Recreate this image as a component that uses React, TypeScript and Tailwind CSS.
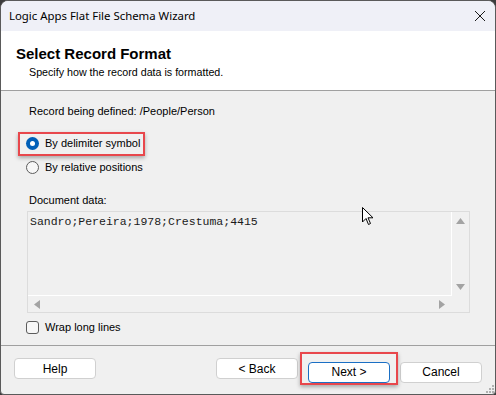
import React, { useState } from 'react';

const ui = { fontFamily: '"Liberation Sans", Arial, sans-serif' };
const mono = { fontFamily: '"Liberation Mono", "Courier New", monospace' };
const title = { fontFamily: '"Noto Sans", "Open Sans", sans-serif' };

function Radio({ checked }: { checked: boolean }) {
    return checked ? (
        <span className="w-[13px] h-[13px] rounded-full bg-[#005fb8] flex items-center justify-center">
            <span className="w-[5px] h-[5px] rounded-full bg-white" />
        </span>
    ) : (
        <span className="w-[13px] h-[13px] rounded-full border border-[#5c5c5c] bg-[#f7f7f7]" />
    );
}

function Btn({ label, primary }: { label: string; primary?: boolean }) {
    return (
        <button
            className={
                primary
                    ? 'w-[82px] h-[21px] rounded-[4px] bg-white border border-[#1a6fc4] text-[12px] text-black'
                    : 'w-[82px] h-[21px] rounded-[4px] bg-white border border-[#d0d0d0] text-[12px] text-black'
            }
            style={ui}
        >
            {label}
        </button>
    );
}

export default function App() {
    const [mode, setMode] = useState('delim');
    const [wrap, setWrap] = useState(false);

    return (
        <div className="w-[496px] h-[395px] bg-[#3c3c3c]">
            <div className="w-full h-full flex flex-col rounded-t-[8px] rounded-b-[4px] border border-[#5a5a5a] overflow-hidden bg-[#f0f0f0] relative">
                {/* title bar */}
                <div className="h-[30px] bg-[#eff0f7] flex items-center justify-between pl-[8px] pr-[9px]">
                    <span className="text-[11.4px] text-black" style={title}>Logic Apps Flat File Schema Wizard</span>
                    <svg width="12" height="12" viewBox="0 0 12 12">
                        <path d="M1 1L11 11M11 1L1 11" stroke="#1a1a1a" strokeWidth="1" fill="none" />
                    </svg>
                </div>

                {/* header */}
                <div className="h-[60px] bg-white border-b border-[#a0a0a0] pl-[15px] pt-[14px]" style={ui}>
                    <div className="text-[15px] font-bold leading-[18px] text-black">Select Record Format</div>
                    <div className="text-[10.7px] leading-[14px] pl-[13px] mt-[2px] text-black">Specify how the record data is formatted.</div>
                </div>

                {/* body */}
                <div className="flex-1 pl-[25px] pr-[25px] pt-[13px] border-b border-[#a0a0a0] relative text-[11px] leading-[14px]" style={ui}>
                    <div className="h-[14px] pl-[3px] text-black">Record being defined: /People/Person</div>

                    <div className="relative mt-[17px]">
                        <label className="h-[16px] flex items-center gap-[6px] text-black cursor-default" onClick={() => setMode('delim')}>
                            <Radio checked={mode === 'delim'} />
                            By delimiter symbol
                        </label>
                        <div className="absolute left-[-8px] top-[-3px] w-[127px] h-[24px] border-2 border-[#e8474c] shadow-[0_2px_4px_rgba(0,0,0,0.3)] pointer-events-none" />
                    </div>

                    <label className="mt-[8px] h-[16px] flex items-center gap-[6px] text-black cursor-default" onClick={() => setMode('rel')}>
                        <Radio checked={mode === 'rel'} />
                        By relative positions
                    </label>

                    <div className="mt-[18px] h-[14px] pl-[3px] text-black">Document data:</div>

                    <div className="mt-[4px] ml-[1px] h-[102px] border border-[#dcdcdc] bg-[#f0f0f0] flex flex-col">
                        <div className="flex-1 flex">
                            <div className="flex-1 border-r border-b border-white pl-[2px] pt-[3px] text-[11.5px] leading-[14px] text-[#1a1a1a]" style={mono}>
                                Sandro;Pereira;1978;Crestuma;4415
                            </div>
                            <div className="w-[17px] flex flex-col items-center justify-between py-[6px]">
                                <svg width="9" height="6" viewBox="0 0 9 6"><path d="M0 6L4.5 0L9 6Z" fill="#a3a3a3" /></svg>
                                <svg width="9" height="6" viewBox="0 0 9 6"><path d="M0 0L4.5 6L9 0Z" fill="#a3a3a3" /></svg>
                            </div>
                        </div>
                        <div className="h-[16px] flex items-center justify-between pl-[6px] pr-[24px]">
                            <svg width="6" height="9" viewBox="0 0 6 9"><path d="M6 0L0 4.5L6 9Z" fill="#a3a3a3" /></svg>
                            <svg width="6" height="9" viewBox="0 0 6 9"><path d="M0 0L6 4.5L0 9Z" fill="#a3a3a3" /></svg>
                        </div>
                    </div>

                    <label className="mt-[7px] h-[14px] flex items-center gap-[6px] text-black cursor-default" onClick={() => setWrap(!wrap)}>
                        <span className="w-[13px] h-[13px] rounded-[3px] border border-[#5c5c5c] bg-[#f7f7f7]" />
                        Wrap long lines
                    </label>

                    {/* mouse pointer */}
                    <svg className="absolute left-[361px] top-[116px]" width="12" height="19" viewBox="0 0 12 19">
                        <path d="M0.5 0.5L0.5 15L4 11.5L6.5 17.5L8.5 16.5L6 10.8L11 10.8Z" fill="white" stroke="black" strokeWidth="1" strokeLinejoin="round" />
                    </svg>
                </div>

                {/* footer */}
                <div className="h-[48px] flex items-start pt-[12px] pl-[13px] pr-[13px]">
                    <Btn label="Help" />
                    <div className="flex-1" />
                    <Btn label="< Back" />
                    <div className="relative ml-[10px]">
                        <Btn label="Next >" primary />
                        <div className="absolute left-[-8px] top-[-6px] w-[98px] h-[33px] border-2 border-[#e8474c] shadow-[0_2px_4px_rgba(0,0,0,0.3)] pointer-events-none" />
                    </div>
                    <div className="ml-[10px]"><Btn label="Cancel" /></div>
                </div>

                {/* resize grip */}
                <svg className="absolute right-[1px] bottom-[1px]" width="8" height="8" viewBox="0 0 8 8">
                    <rect x="6" y="0" width="2" height="2" fill="#b0b0b0" />
                    <rect x="3" y="3" width="2" height="2" fill="#b0b0b0" />
                    <rect x="6" y="3" width="2" height="2" fill="#b0b0b0" />
                    <rect x="0" y="6" width="2" height="2" fill="#b0b0b0" />
                    <rect x="3" y="6" width="2" height="2" fill="#b0b0b0" />
                    <rect x="6" y="6" width="2" height="2" fill="#b0b0b0" />
                </svg>
            </div>
        </div>
    );
}
